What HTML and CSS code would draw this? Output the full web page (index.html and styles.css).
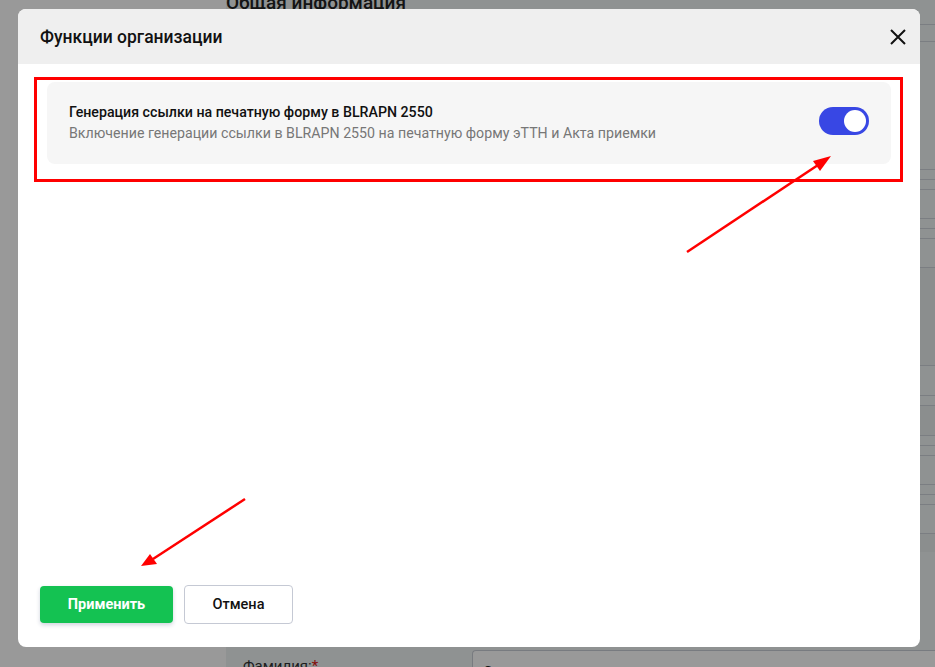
FILE: index.html
```html
<!DOCTYPE html>
<html lang="ru">
  <head>
    <meta charset="UTF-8" />
    <meta name="viewport" content="width=device-width, initial-scale=1.0" />
    <title>Функции организации</title>
    <link rel="stylesheet" href="styles.css">
  </head>
  <body>
    <!-- page behind the dialog -->
    <div class="page">
      <aside class="sidebar"></aside>
      <main class="content">
        <h2 class="content-title">Общая информация</h2>
        <div class="rows">
          <div class="row row-a"></div>
          <div class="row row-b"></div>
          <div class="row row-c"></div>
          <div class="row row-c"></div>
          <div class="row row-d"></div>
          <div class="row row-c"></div>
          <div class="row row-c"></div>
          <div class="row row-d"></div>
          <div class="row row-e"></div>
          <div class="row row-f"></div>
          <div class="row row-c"></div>
          <div class="row row-g"></div>
          <div class="row row-c"></div>
          <div class="row row-c"></div>
          <div class="row row-d"></div>
          <div class="row row-c"></div>
          <div class="row row-c"></div>
          <div class="row row-d"></div>
          <div class="row row-h"></div>
        </div>
        <div class="field">
          <label class="field-label">Фамилия:<span class="req">*</span></label>
          <div class="field-input">С</div>
        </div>
      </main>
    </div>

    <!-- dialog -->
    <div class="overlay">
      <div class="modal">
        <div class="modal-header">
          <h1>Функции организации</h1>
          <button class="close-btn" aria-label="Закрыть">
            <svg width="18" height="18" viewBox="0 0 18 18">
              <path d="M2 2 L16 16 M16 2 L2 16" stroke="#111" stroke-width="2" fill="none" />
            </svg>
          </button>
        </div>

        <div class="modal-body">
          <div class="feature">
            <div class="feature-text">
              <div class="feature-title">Генерация ссылки на печатную форму в BLRAPN 2550</div>
              <div class="feature-desc">Включение генерации ссылки в BLRAPN 2550 на печатную форму эТТН и Акта приемки</div>
            </div>
            <label class="switch">
              <input type="checkbox" checked />
              <span class="slider"></span>
            </label>
          </div>
        </div>

        <div class="modal-footer">
          <button class="btn btn-primary">Применить</button>
          <button class="btn btn-ghost">Отмена</button>
        </div>
      </div>
    </div>

    <!-- red marks drawn over the dialog -->
    <svg class="marks" width="935" height="667" viewBox="0 0 935 667">
      <rect x="35.5" y="78.5" width="866" height="102" fill="none" stroke="#ff0000" stroke-width="3" />
      <line x1="687" y1="252" x2="818" y2="165" stroke="#ff0000" stroke-width="2.5" />
      <polygon points="831,156 813,161 820,171" fill="#ff0000" />
      <line x1="245" y1="499" x2="153" y2="559" stroke="#ff0000" stroke-width="2.5" />
      <polygon points="141,566 150,554 157,564" fill="#ff0000" />
    </svg>
  </body>
</html>
```

FILE: styles.css
```css
* {
  margin: 0;
  padding: 0;
  box-sizing: border-box;
}
body {
  width: 935px;
  height: 667px;
  overflow: hidden;
  font-family: Roboto, "Liberation Sans", sans-serif;
  background-color: #ffffff;
  position: relative;
}

/* background page */
.page {
  display: flex;
  height: 100%;
}
.sidebar {
  width: 226px;
  background-color: #ffffff;
}
.content {
  flex: 1;
  background-color: #eff3f3;
  display: flex;
  flex-direction: column;
}
.content-title {
  font-size: 19px;
  font-weight: 500;
  color: #222;
  margin-top: -9px;
  line-height: 24px;
  flex-shrink: 0;
}
.rows {
  margin-left: 246px;
  height: 635px;
  flex-shrink: 0;
  overflow: hidden;
}
.row {
  border-top: 1px solid #ced2d9;
}
.row-a { height: 17px; margin-top: 9px; }
.row-b { height: 128px; }
.row-c { height: 10px; }
.row-d { height: 29px; }
.row-e { height: 98px; background-color: #e8eded; }
.row-f { height: 30px; }
.row-g { height: 30px; background-color: #e8eded; }
.row-h { height: 19px; background-color: #e8eded; }

.field {
  display: flex;
  align-items: flex-start;
  padding-left: 17px;
  flex-shrink: 0;
}
.field-label {
  width: 229px;
  padding-top: 7px;
  font-size: 15px;
  color: #333;
}
.req {
  color: #d11;
}
.field-input {
  flex: 1;
  height: 40px;
  border: 1px solid #c9ced6;
  border-right: 0;
  border-radius: 4px 0 0 0;
  background-color: #ffffff;
  padding: 12px 10px;
  font-size: 15px;
  color: #222;
}

/* dialog */
.overlay {
  position: absolute;
  inset: 0;
  background: rgba(0, 0, 0, 0.4);
  padding: 9px 15px 20px 18px;
}
.modal {
  width: 902px;
  height: 638px;
  background-color: #ffffff;
  border-radius: 8px;
  overflow: hidden;
  display: flex;
  flex-direction: column;
}
.modal-header {
  height: 55px;
  background-color: #efefef;
  display: flex;
  align-items: center;
  justify-content: space-between;
  padding: 0 13px 0 22px;
}
.modal-header h1 {
  font-size: 17.5px;
  font-weight: 500;
  color: #111;
}
.close-btn {
  border: 0;
  background: none;
  width: 18px;
  height: 18px;
  display: flex;
  cursor: pointer;
}
.modal-body {
  flex: 1;
  padding: 18px 29px;
}
.feature {
  height: 82px;
  background-color: #f6f6f6;
  border-radius: 8px;
  display: flex;
  align-items: center;
  justify-content: space-between;
  padding: 0 22px;
}
.feature-text {
  margin-top: -2px;
}
.feature-title {
  font-size: 14.2px;
  font-weight: 500;
  color: #111;
  line-height: 20px;
}
.feature-desc {
  font-size: 14.2px;
  color: #777;
  line-height: 20px;
  margin-top: 1px;
}
.switch {
  position: relative;
  width: 50px;
  height: 28px;
  margin-top: -4px;
  flex-shrink: 0;
}
.switch input {
  display: none;
}
.slider {
  position: absolute;
  inset: 0;
  border-radius: 14px;
  background-color: #3847e4;
  cursor: pointer;
}
.slider::after {
  content: "";
  position: absolute;
  top: 3px;
  right: 3px;
  width: 22px;
  height: 22px;
  border-radius: 50%;
  background-color: #ffffff;
}
.modal-footer {
  display: flex;
  align-items: center;
  gap: 11px;
  padding: 0 22px 23px;
}
.btn {
  font-family: Roboto, "Liberation Sans", sans-serif;
  font-size: 14.5px;
  font-weight: 500;
  border-radius: 4px;
  cursor: pointer;
}
.btn-primary {
  width: 133px;
  height: 37px;
  border: 0;
  background-color: #14c252;
  color: #ffffff;
  font-weight: 700;
  box-shadow: 0 2px 4px rgba(20, 40, 90, 0.2);
}
.btn-ghost {
  width: 109px;
  height: 39px;
  border: 1px solid #c5c9d4;
  background-color: #ffffff;
  color: #111;
}

.marks {
  position: absolute;
  top: 0;
  left: 0;
  pointer-events: none;
}
```
